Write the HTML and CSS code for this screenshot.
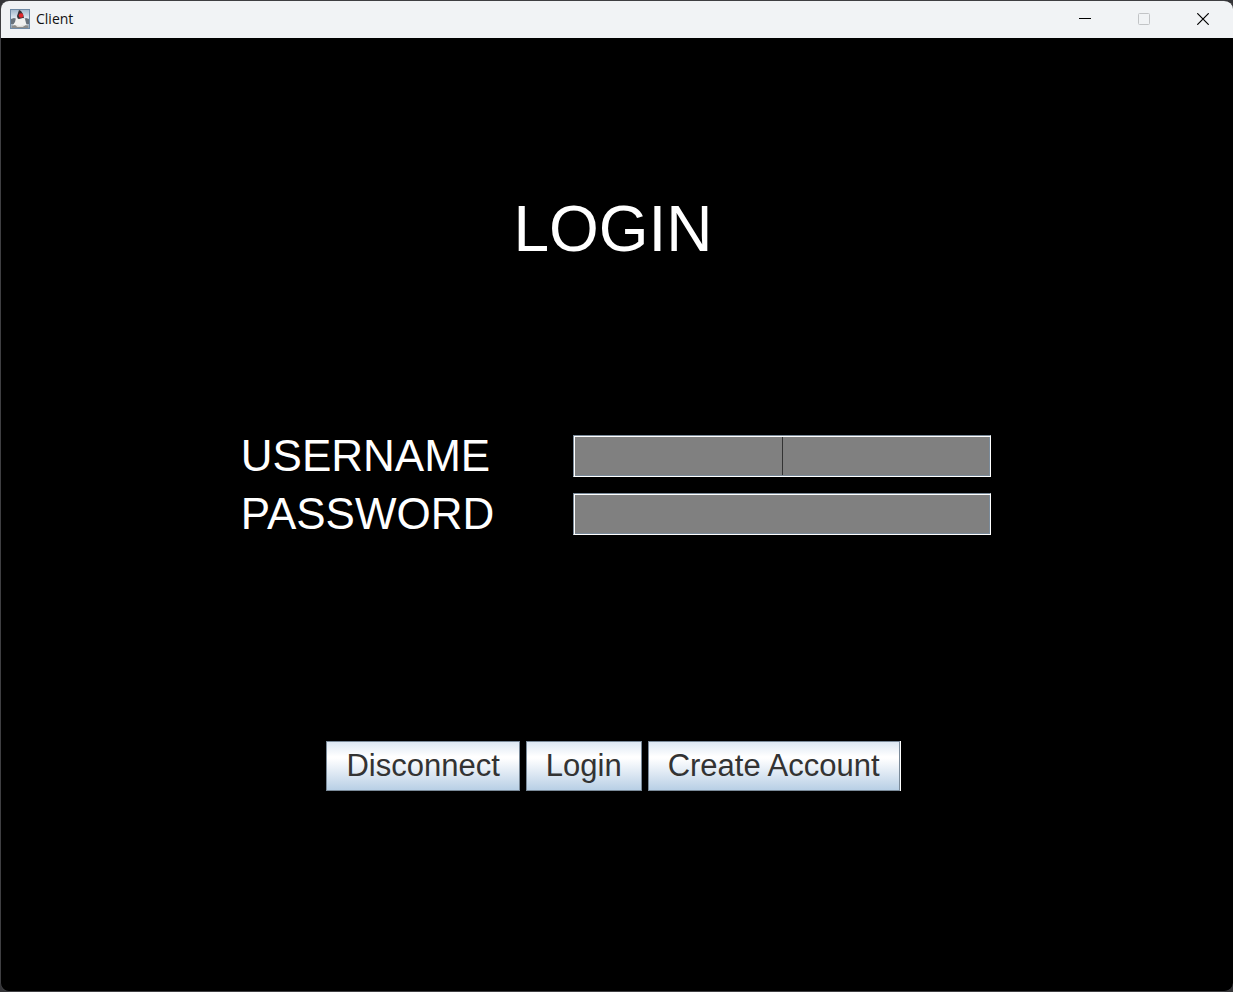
FILE: index.html
```html
<!DOCTYPE html>
<html lang="en">
<head>
<meta charset="utf-8">
<meta name="viewport" content="width=device-width, initial-scale=1">
<title>Client</title>
<link rel="stylesheet" href="styles.css">
</head>
<body>
<div class="window">
  <header class="titlebar">
    <svg class="app-icon" viewBox="0 0 20 20" aria-hidden="true">
      <defs>
        <linearGradient id="sky" x1="0" y1="0" x2="0" y2="1">
          <stop offset="0" stop-color="#9fb6ca"/>
          <stop offset=".45" stop-color="#dfe8f0"/>
          <stop offset="1" stop-color="#8c9aa6"/>
        </linearGradient>
      </defs>
      <rect x=".5" y=".5" width="19" height="19" fill="url(#sky)" stroke="#6f8aa5"/>
      <path d="M1 10l3-1 3 1v4l-3 1H1zM19 10l-3-1-2 1v4l2 1h3z" fill="#68727b"/>
      <path d="M9 1l2 1 2 3 1 4-2 1-4 1-1-4z" fill="#3a3035"/>
      <path d="M6 9l3 1 4-1 2 1 1 4 1 3-3 1-4 1-5-1-2-2 2-3z" fill="#f1f1ef"/>
      <path d="M2 17l3-1 3 2h4l4-2 2 1v2H2z" fill="#8d8c89"/>
      <path d="M6 16l4 1 4-1-1 2H7z" fill="#dddcd8"/>
      <circle cx="11" cy="6.5" r="2.3" fill="#e2282c"/>
    </svg>
    <span class="title">Client</span>
    <div class="controls">
      <button class="control" type="button" aria-label="Minimize">
        <svg viewBox="0 0 12 12"><path d="M0 5.5h12"/></svg>
      </button>
      <button class="control" type="button" aria-label="Maximize" disabled>
        <svg viewBox="0 0 12 12"><rect x=".5" y=".5" width="11" height="11" rx="1"/></svg>
      </button>
      <button class="control" type="button" aria-label="Close">
        <svg viewBox="0 0 12 12"><path stroke-width="1.2" d="M.3.3l11.4 11.4M11.7.3L.3 11.7"/></svg>
      </button>
    </div>
  </header>
  <main class="content">
    <h1 class="heading">LOGIN</h1>
    <form class="login" id="login">
      <label class="label" for="username">USERNAME</label>
      <input class="field field-active" id="username" type="text" autocomplete="off">
      <label class="label" for="password">PASSWORD</label>
      <input class="field" id="password" type="password" autocomplete="off">
    </form>
    <div class="actions">
      <button class="action" type="button">Disconnect</button>
      <button class="action" type="submit" form="login">Login</button>
      <button class="action action-last" type="button">Create Account</button>
    </div>
  </main>
</div>
</body>
</html>
```
FILE: styles.css
```css
* {
  box-sizing: border-box;
}

body {
  margin: 0;
  background: #353538;
  font-family: "Liberation Sans", Arial, sans-serif;
}

.window {
  display: flex;
  flex-direction: column;
  min-height: 100vh;
  overflow: hidden;
  border: 1px solid #3f3f42;
  border-right: 0;
  border-radius: 9px;
  background: #000;
}

.titlebar {
  display: flex;
  align-items: center;
  height: 37px;
  padding: 0 1px 1px 9px;
  background: #f1f3f5;
}

.app-icon {
  width: 20px;
  height: 20px;
  margin-right: 6px;
}

.title {
  color: #111;
  font: 14px/20px "Open Sans", "Noto Sans", sans-serif;
}

.controls {
  display: flex;
  margin-left: auto;
  height: 100%;
}

.control {
  display: grid;
  place-items: center;
  width: 59px;
  padding: 0;
  border: 0;
  background: none;
}

.control svg {
  width: 12px;
  height: 12px;
  fill: none;
  stroke: #000;
}

.control:disabled svg {
  stroke: #c2c4c6;
}

.content {
  flex: 1;
  display: grid;
  grid-template-rows: 81fr 27fr 92fr;
  place-items: center;
  padding: 0 2px 8px 0;
}

.heading {
  margin: 0;
  padding-right: 6px;
  color: #fff;
  font-size: 64px;
  font-weight: 400;
  line-height: 72px;
}

.login {
  display: grid;
  grid-template-columns: 332fr 418fr;
  row-gap: 16px;
  align-items: center;
  width: 61%;
}

.label {
  color: #fff;
  font-size: 44px;
  line-height: 42px;
}

.field {
  width: 100%;
  height: 42px;
  border: 1px solid #fff;
  border-top-color: #7a8a99;
  border-left-color: #7a8a99;
  border-radius: 0;
  outline: 0;
  background-color: #808080;
  box-shadow: inset 1px 1px #fff, inset -1px -1px #7a8a99;
  color: #333;
  font: 31px/36px "Liberation Sans", Arial, sans-serif;
  text-align: center;
}

.field-active {
  background-image: linear-gradient(#333, #333);
  background-position: center;
  background-repeat: no-repeat;
  background-size: 1px 100%;
}

.actions {
  display: flex;
  gap: 6px;
  padding-right: 6px;
}

.action {
  height: 50px;
  padding: 0 19px;
  border: 1px solid #7a8a99;
  background: linear-gradient(#dde8f3, #fff 30%, #fff 34%, #dde8f3 66%, #b8cfe5);
  color: #333;
  font: 31px/48px "Liberation Sans", Arial, sans-serif;
}

.action-last {
  box-shadow: 1px 0 #fff;
}
```
